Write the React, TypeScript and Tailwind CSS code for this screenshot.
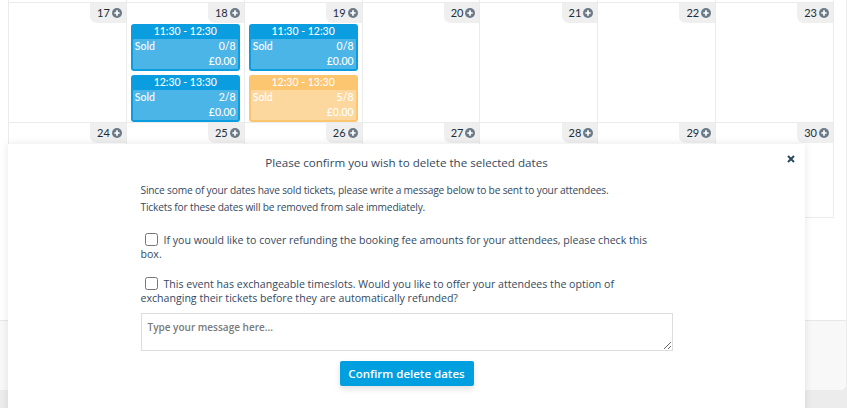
import React from "react";

function PlusIcon() {
  return (
    <svg width="10" height="10" viewBox="0 0 10 10" className="block">
      <circle cx="5" cy="5" r="5" fill="#6b7a86" />
      <path d="M5 2.3V7.7M2.3 5H7.7" stroke="#ffffff" strokeWidth="1.7" />
    </svg>
  );
}

type Ev = { time: string; sold: string; price: string; orange?: boolean };

function EventBox({ ev }: { ev: Ev }) {
  const outer = ev.orange ? "bg-[#fcc570]" : "bg-[#0a9de0]";
  const inner = ev.orange ? "bg-[#fdd89e]" : "bg-[#4cb5e7]";
  return (
    <div className={`mx-[4px] rounded-[3px] px-[2px] pb-[2px] ${outer} text-white`}>
      <div className="h-[15px] text-center text-[10.5px] leading-[15px] font-medium">{ev.time}</div>
      <div className={`${inner} rounded-[1px] px-[2px] text-[10.5px] leading-[15px] font-medium`}>
        <div className="flex justify-between">
          <span>Sold</span>
          <span>{ev.sold}</span>
        </div>
        <div className="flex justify-end">
          <span>{ev.price}</span>
        </div>
      </div>
    </div>
  );
}

function DayCell({ day, events = [], h }: { day: number; events?: Ev[]; h: string }) {
  return (
    <div className={`border-r border-b border-[#ebebeb] ${h} flex flex-col`}>
      <div className="flex justify-end">
        <div className="h-[20px] pl-[7px] pr-[4px] bg-[#efefef] rounded-bl-[7px] flex items-center gap-[2px] text-[11px] text-[#1e2d38]">
          <span>{day}</span>
          <PlusIcon />
        </div>
      </div>
      <div className="mt-[1px] flex flex-col gap-[4px]">
        {events.map((e, i) => (
          <EventBox key={i} ev={e} />
        ))}
      </div>
    </div>
  );
}

export default function App() {
  const row1: { day: number; events?: Ev[] }[] = [
    { day: 17 },
    {
      day: 18,
      events: [
        { time: "11:30 - 12:30", sold: "0/8", price: "£0.00" },
        { time: "12:30 - 13:30", sold: "2/8", price: "£0.00" },
      ],
    },
    {
      day: 19,
      events: [
        { time: "11:30 - 12:30", sold: "0/8", price: "£0.00" },
        { time: "12:30 - 13:30", sold: "5/8", price: "£0.00", orange: true },
      ],
    },
    { day: 20 },
    { day: 21 },
    { day: 22 },
    { day: 23 },
  ];
  const row2 = [24, 25, 26, 27, 28, 29, 30];

  return (
    <div
      className="relative h-[408px] w-[847px] overflow-hidden bg-[#ececec]"
      style={{ fontFamily: "Lato, 'Noto Sans', sans-serif" }}
    >
      <div className="h-[390px] w-[846px] bg-white rounded-br-[6px] flex flex-col">
        <div className="ml-[8px] w-[826px]">
          <div className="grid grid-cols-7 h-[2px] border-l border-[#ebebeb]">
            {row1.map((d) => (
              <div key={d.day} className="border-r border-[#ebebeb]" />
            ))}
          </div>
          <div className="grid grid-cols-7 border-l border-t border-[#ebebeb]">
            {row1.map((d) => (
              <DayCell key={d.day} day={d.day} events={d.events} h="h-[120px]" />
            ))}
          </div>
          <div className="grid grid-cols-7 border-l border-[#ebebeb]">
            {row2.map((d) => (
              <DayCell key={d} day={d} h="h-[95px]" />
            ))}
          </div>
        </div>
        <div className="flex-1" />
        <div className="h-[70px] bg-[#f8f8f8] border-t border-[#e8e8e8] rounded-br-[6px]" />
      </div>

      <div
        className="absolute left-[8px] top-[144px] w-[797px] h-[290px] bg-white shadow-[0_0_8px_rgba(0,0,0,0.10)] text-[#34495e]"
        style={{ fontFamily: "'Open Sans', 'Noto Sans', sans-serif" }}
      >
        <button className="absolute right-[10px] top-[11px] w-[8px] h-[8px]" aria-label="close">
          <svg width="8" height="8" viewBox="0 0 8 8" className="block">
            <path d="M1 1L7 7M7 1L1 7" stroke="#2d4a5c" strokeWidth="2" />
          </svg>
        </button>
        <div className="pt-[11px] text-center text-[11.6px] leading-[16px]">
          Please confirm you wish to delete the selected dates
        </div>
        <div className="w-[532px] mx-auto">
          <p className="mt-[11px] text-[10.2px] tracking-[-0.18px] leading-[17px]">
            Since some of your dates have sold tickets, please write a message below to be sent to your attendees.
            <br />
            Tickets for these dates will be removed from sale immediately.
          </p>
          <label className="block mt-[17px] text-[10.6px] leading-[14px]">
            <input type="checkbox" className="ml-[4px] mr-[6px] w-[13px] h-[13px] align-[-2px]" />
            If you would like to cover refunding the booking fee amounts for your attendees, please check this
            <br />
            box.
          </label>
          <label className="block mt-[16px] text-[10.6px] leading-[14px]">
            <input type="checkbox" className="ml-[4px] mr-[6px] w-[13px] h-[13px] align-[-2px]" />
            This event has exchangeable timeslots. Would you like to offer your attendees the option of
            <br />
            exchanging their tickets before they are automatically refunded?
          </label>
          <textarea
            className="mt-[8px] block w-[532px] h-[38px] border border-[#dcdcdc] px-[6px] py-[6px] text-[10px] font-semibold outline-none placeholder:text-[#7a7a7a]"
            placeholder="Type your message here..."
          />
          <div className="mt-[10px] flex justify-center">
            <button className="h-[25px] w-[134px] rounded-[2px] bg-[#009fe0] text-white text-[11.5px] font-semibold shadow-[0_3px_6px_rgba(0,0,0,0.12)]">
              Confirm delete dates
            </button>
          </div>
        </div>
      </div>
    </div>
  );
}
